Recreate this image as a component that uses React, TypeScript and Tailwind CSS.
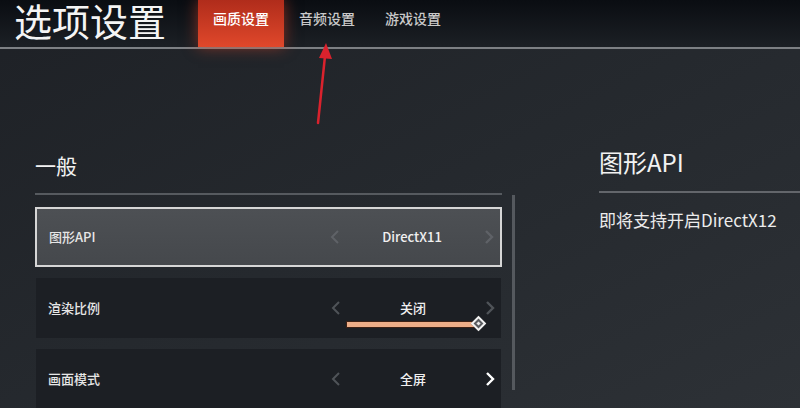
import React from 'react';

function Chevron({ dir, className }: { dir: 'left' | 'right'; className: string }) {
  return (
    <svg width="10" height="16" viewBox="0 0 10 16" className={className} fill="none">
      {dir === 'left' ? (
        <polyline points="8,2 2,8 8,14" stroke="currentColor" strokeWidth="2" />
      ) : (
        <polyline points="2,2 8,8 2,14" stroke="currentColor" strokeWidth="2.4" />
      )}
    </svg>
  );
}

function OptionRow({
  label,
  value,
  selected,
  slider,
  rightBright,
}: {
  label: string;
  value: string;
  selected?: boolean;
  slider?: boolean;
  rightBright?: boolean;
}) {
  return (
    <div
      className={
        selected
          ? 'h-[60px] flex items-center justify-between pl-[12px] pr-[6px] border-2 border-[#d6d6d6] bg-gradient-to-b from-[#4d5054] to-[#45484c]'
          : 'h-[60px] mx-[1px] flex items-center justify-between pl-[12px] pr-[6px] bg-[#1c1f24]'
      }
    >
      <span className="text-[13px] font-medium text-[#e6e6e6]">{label}</span>
      <div className="w-[164px] flex items-center justify-between">
        <Chevron dir="left" className={selected ? 'text-[#5f6267]' : 'text-[#4f5358]'} />
        <div className="relative flex flex-col items-center">
          <span className="text-[13px] font-medium leading-[18px] text-[#f0f0f0]">{value}</span>
          {slider && (
            <div className="absolute top-[21px] left-1/2 -translate-x-1/2 w-[134px] h-[8px] flex items-center">
              <div className="w-[132px] h-[7px] bg-[#eeae88] border border-[#3d2115]" />
              <div className="absolute right-[-4px] top-[-2px] w-[11px] h-[11px] rotate-45 border-2 border-[#f2f2f2] bg-[#5a5c60] flex items-center justify-center">
                <div className="w-[3px] h-[3px] bg-[#e8e8e8]" />
              </div>
            </div>
          )}
        </div>
        <Chevron
          dir="right"
          className={rightBright ? 'text-white' : selected ? 'text-[#5f6267]' : 'text-[#4f5358]'}
        />
      </div>
    </div>
  );
}

export default function App() {
  return (
    <div className="relative w-[800px] h-[408px] overflow-hidden bg-gradient-to-br from-[#1e2126] via-[#25292e] to-[#2d3136] font-['Noto_Sans_CJK_SC','Noto_Sans',sans-serif] text-white">
      {/* header */}
      <div className="h-[49px] flex items-start bg-gradient-to-b from-[#0a0d12] to-[#1c2025] border-b-2 border-[#7d8084]">
        <h1 className="pl-[14px] text-[38px] leading-[40px] text-[#f4f4f4] w-[198px]">选项设置</h1>
        <div className="flex h-[47px]">
          <div className="w-[86px] h-full flex justify-center pt-[8px] bg-gradient-to-b from-[#b02c1b] to-[#e0482b] shadow-[0_0_14px_rgba(225,70,40,0.55)]">
            <span className="text-[14px] font-medium leading-[20px] text-white">画质设置</span>
          </div>
          <div className="w-[86px] flex justify-center pt-[8px]">
            <span className="text-[14px] font-medium leading-[20px] text-[#c9c9c9]">音频设置</span>
          </div>
          <div className="w-[86px] flex justify-center pt-[8px]">
            <span className="text-[14px] font-medium leading-[20px] text-[#c9c9c9]">游戏设置</span>
          </div>
        </div>
      </div>

      {/* body */}
      <div className="flex pl-[35px]">
        <div className="w-[467px] pt-[106px]">
          <div className="text-[21px] leading-none text-[#f2f2f2]">一般</div>
          <div className="mt-[17px] h-[2px] bg-[#565a5f]" />
          <div className="mt-[12px] flex flex-col gap-[11px]">
            <OptionRow label="图形API" value="DirectX11" selected />
            <OptionRow label="渲染比例" value="关闭" slider />
            <OptionRow label="画面模式" value="全屏" rightBright />
          </div>
        </div>
        <div className="ml-[10px] mt-[146px] w-[3px] h-[195px] bg-[#55595e]" />
        <div className="ml-[84px] flex-1 pt-[101px]">
          <div className="text-[24px] leading-none text-[#f2f2f2]">图形API</div>
          <div className="mt-[17px] h-[2px] bg-[#63666b]" />
          <div className="mt-[18px] text-[17px] leading-none text-[#ececec]">即将支持开启DirectX12</div>
        </div>
      </div>

      {/* red annotation arrow */}
      <svg className="absolute left-0 top-0 pointer-events-none" width="800" height="408">
        <line x1="318" y1="123" x2="325" y2="56" stroke="#d9222d" strokeWidth="2.5" strokeLinecap="round" />
        <polygon points="326,43 319,58 332,59" fill="#d9222d" />
      </svg>
    </div>
  );
}
